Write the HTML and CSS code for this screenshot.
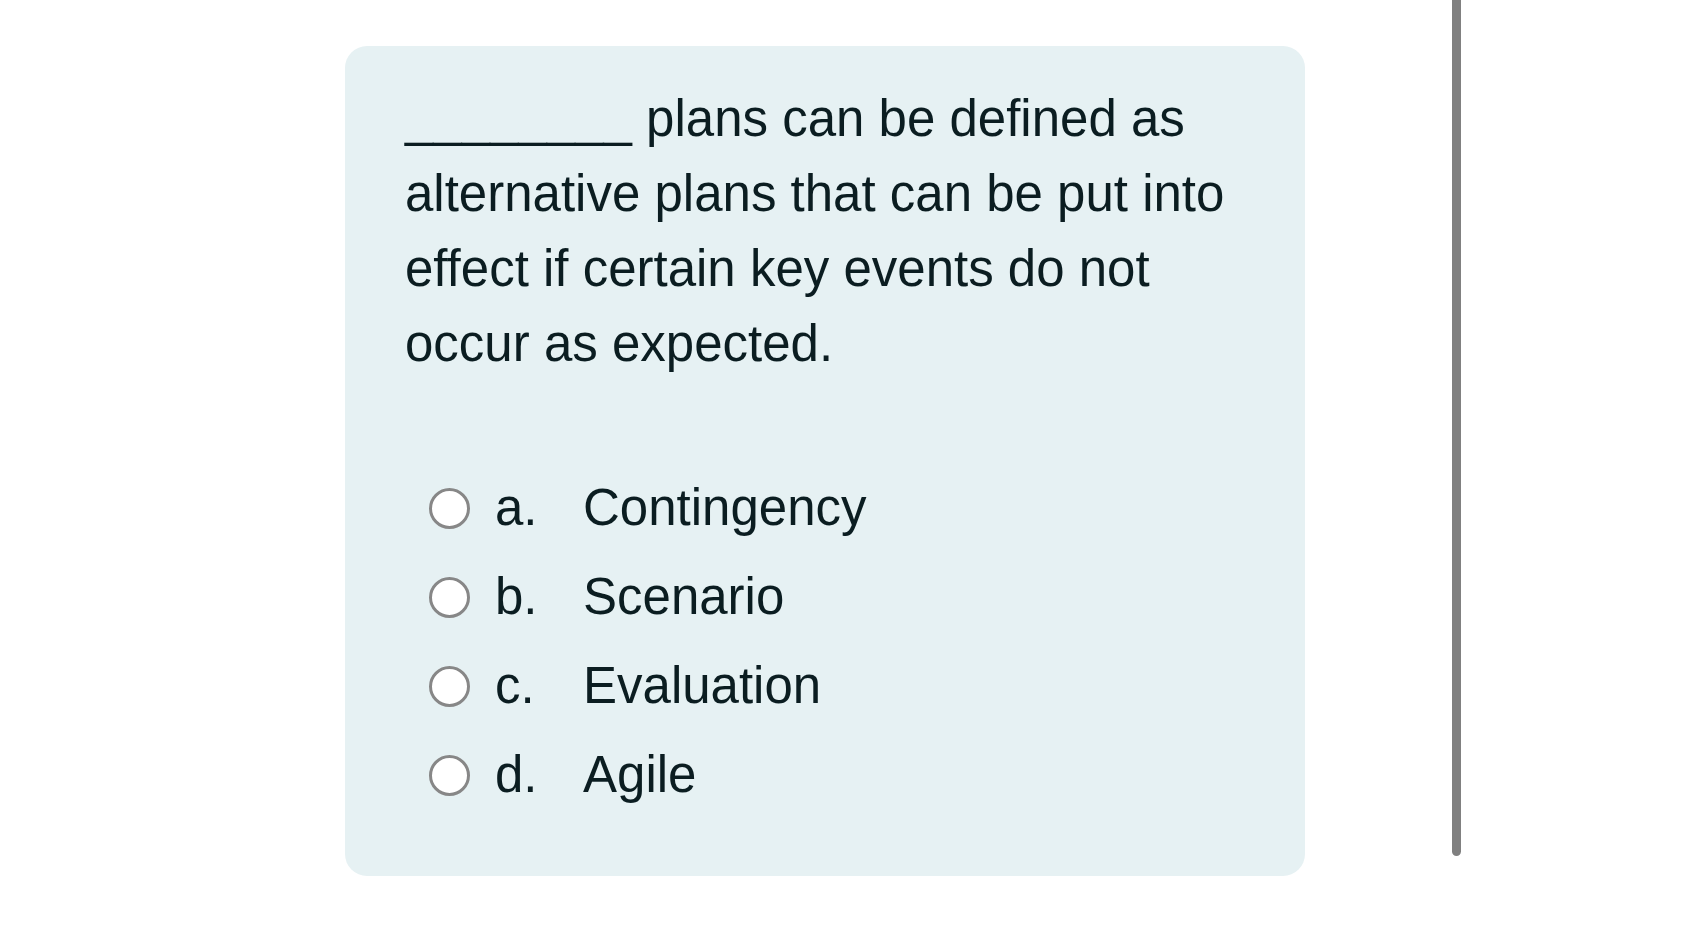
FILE: index.html
```html
<!DOCTYPE html>
<html lang="en">
<head>
<meta charset="utf-8">
<title>Question</title>
<link rel="stylesheet" href="styles.css">
</head>
<body>
<div class="page">
  <div class="card">
    <p class="question">________ plans can be defined as alternative plans that can be put into effect if certain key events do not occur as expected.</p>
    <ul class="options">
      <li class="option"><span class="radio"></span><span class="letter">a.</span><span class="answer">Contingency</span></li>
      <li class="option"><span class="radio"></span><span class="letter">b.</span><span class="answer">Scenario</span></li>
      <li class="option"><span class="radio"></span><span class="letter">c.</span><span class="answer">Evaluation</span></li>
      <li class="option"><span class="radio"></span><span class="letter">d.</span><span class="answer">Agile</span></li>
    </ul>
  </div>
  <div class="scrollbar"></div>
</div>
</body>
</html>
```

FILE: styles.css
```css
html, body {
  margin: 0;
  padding: 0;
  background: #ffffff;
}

body {
  font-family: "Liberation Sans", Arial, sans-serif;
  color: #0b1d21;
  width: 1681px;
  height: 946px;
  overflow: hidden;
}

.page {
  display: flex;
  align-items: flex-start;
  padding-left: 345px;
}

.card {
  box-sizing: border-box;
  width: 960px;
  height: 830px;
  margin-top: 46px;
  background: #e6f1f3;
  border-radius: 22px;
  padding: 35px 59px 57px 60px;
}

.question {
  margin: 0;
  font-size: 51px;
  line-height: 75px;
}

.options {
  list-style: none;
  margin: 82px 0 0 0;
  padding: 0 0 0 24px;
}

.option {
  display: flex;
  align-items: center;
  height: 89px;
  font-size: 51px;
  line-height: 89px;
}

.radio {
  box-sizing: border-box;
  flex: 0 0 41px;
  width: 41px;
  height: 41px;
  border: 3.5px solid #878787;
  border-radius: 50%;
  background: #ffffff;
  margin-right: 25px;
  position: relative;
  top: 1px;
}

.letter {
  flex: 0 0 88px;
  width: 88px;
}

.answer {
  flex: 1 1 auto;
}

.scrollbar {
  flex: 0 0 9px;
  width: 9px;
  height: 856px;
  margin-left: 147px;
  background: #808080;
  border-radius: 0 0 5px 5px;
}
```
